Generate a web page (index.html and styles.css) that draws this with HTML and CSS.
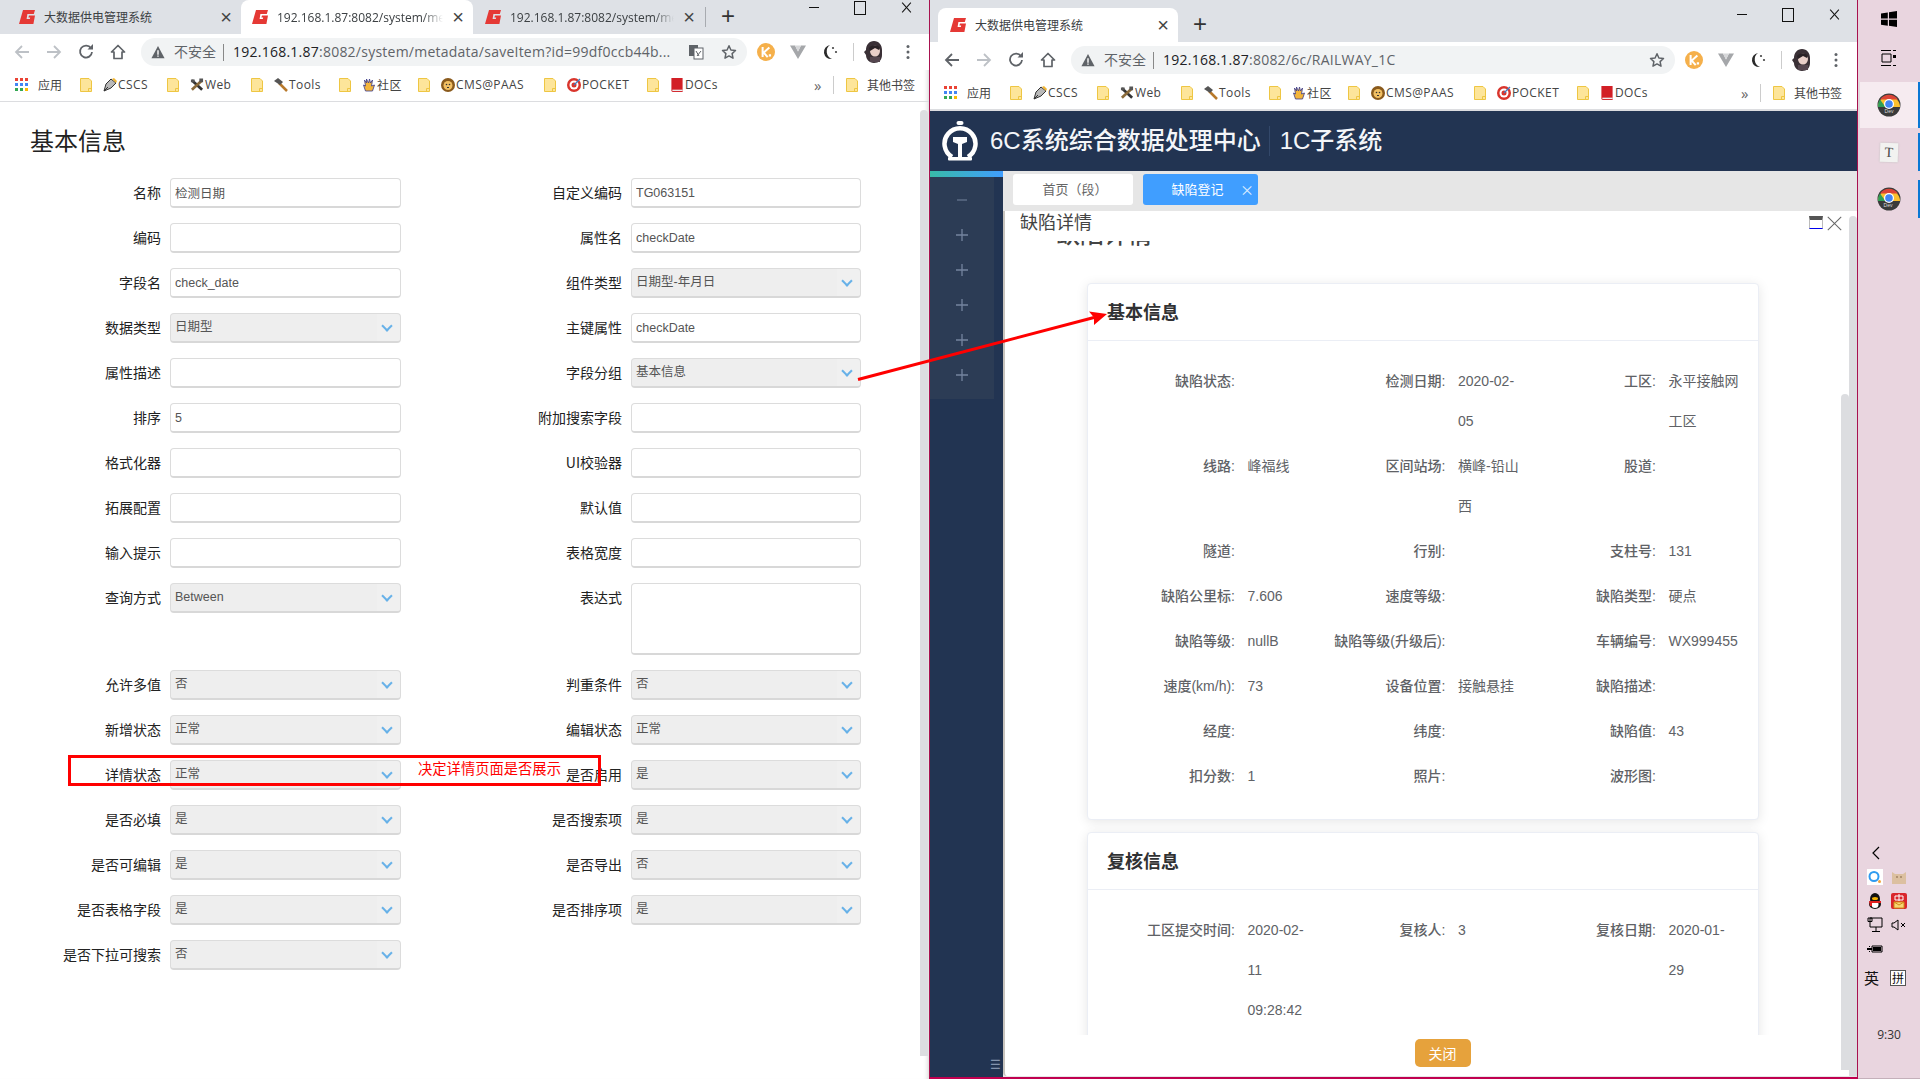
FILE: index.html
```html
<!DOCTYPE html>
<html lang="zh-CN">
<head>
<meta charset="utf-8">
<title>大数据供电管理系统</title>
<link rel="stylesheet" href="styles.css">
</head>
<body>
<svg class="defs" width="0" height="0" aria-hidden="true">
  <symbol id="fav" viewBox="0 0 16 14">
    <path d="M4 0h12l-1.200 4H8.400L7.600 9h3.200l.4-1.600H9.400l.6-2h6L14.400 14H0z" fill="#e53935"/>
  </symbol>
  <symbol id="back" viewBox="0 0 16 16"><path d="M15 8H2M8 2 2 8l6 6" fill="none" stroke="currentColor" stroke-width="1.800"/></symbol>
  <symbol id="fwd" viewBox="0 0 16 16"><path d="M1 8h13M8 2l6 6-6 6" fill="none" stroke="currentColor" stroke-width="1.800"/></symbol>
  <symbol id="reload" viewBox="0 0 16 16"><path d="M13 4.200A6 6 0 1 0 14 8" fill="none" stroke="currentColor" stroke-width="1.800"/><path d="M9.500 5.500H15V0z" fill="currentColor"/></symbol>
  <symbol id="home" viewBox="0 0 16 16"><path d="M8 1.500 1.500 8H4v6.500h8V8h2.500z" fill="none" stroke="currentColor" stroke-width="1.700" stroke-linejoin="round"/></symbol>
  <symbol id="warn" viewBox="0 0 16 16"><path d="M8 1 15.500 15H.5z" fill="#5f6368"/><path d="M7.200 6h1.600v5H7.200zM7.200 12h1.600v1.500H7.200z" fill="#fff"/></symbol>
  <symbol id="star" viewBox="0 0 16 16"><path d="m8 1.800 1.900 4.200 4.600.5-3.400 3.100.9 4.600L8 11.900l-4 2.300.9-4.600L1.500 6.500l4.600-.5z" fill="none" stroke="#5f6368" stroke-width="1.500" stroke-linejoin="round"/></symbol>
  <symbol id="trans" viewBox="0 0 16 16"><rect x="1" y="1" width="9" height="11" fill="#5f6368"/><rect x="6" y="4" width="9" height="11" fill="#fff" stroke="#5f6368"/><path d="m8 7 3 5m2-5-4 5" stroke="#5f6368" fill="none"/></symbol>
  <symbol id="ext-k" viewBox="0 0 16 16"><circle cx="8" cy="8" r="8" fill="#f5b04b"/><path d="M5 3.500v9M11 4 6 8.500l3.500 4M10.500 11h2" stroke="#fff" stroke-width="1.800" fill="none"/></symbol>
  <symbol id="ext-v" viewBox="0 0 16 16"><path d="M0 1.500h5l3 6 3-6h5L8 15z" fill="#a5a7aa"/><path d="M5 1.500h6L8 7.500z" fill="#d6d7d9"/></symbol>
  <symbol id="ext-m" viewBox="0 0 16 16"><path d="M8 1A7 7 0 1 0 10 15 A8 8 0 0 1 8 1z" fill="#2b2b2b"/><circle cx="11" cy="4" r="1.100" fill="#444"/><circle cx="14" cy="8" r="1.100" fill="#444"/></symbol>
  <symbol id="avatar" viewBox="0 0 20 22"><path d="M10 0C5 0 2 4 2 9L0 11l2 3c0 4 3 8 8 8s8-3 8-8V9c0-5-3-9-8-9z" fill="#3a3036"/><ellipse cx="11" cy="10" rx="5" ry="5.500" fill="#e9cfc9"/><path d="M5 7c2-3 9-4 11 0l-1 2-4-2-5 3z" fill="#2a2226"/><path d="M6 16h10v5H6z" fill="#55464f"/></symbol>
  <symbol id="dots" viewBox="0 0 4 16"><circle cx="2" cy="2.500" r="1.500" fill="#5f6368"/><circle cx="2" cy="8" r="1.500" fill="#5f6368"/><circle cx="2" cy="13.500" r="1.500" fill="#5f6368"/></symbol>
  <symbol id="apps" viewBox="0 0 13 13">
    <path fill="#ea4335" d="M0 0h3v3H0zM5 0h3v3H5z"/><path fill="#ea4335" d="M10 0h3v3h-3z"/>
    <path fill="#4285f4" d="M0 5h3v3H0zM5 5h3v3H5zM10 5h3v3h-3z"/>
    <path fill="#34a853" d="M0 10h3v3H0zM5 10h3v3H5z"/><path fill="#fbbc04" d="M10 10h3v3h-3z"/>
  </symbol>
  <symbol id="folder" viewBox="0 0 12 14"><path d="M.5.5h8.500l2.500 2.500v10.500H.5z" fill="#fde59a" stroke="#eec643"/><path d="M8.500 13.500v-3h3" fill="none" stroke="#eec643"/></symbol>
  <symbol id="b-pen" viewBox="0 0 14 14"><path d="M1 13 3 6l5-5 5 4-5 5z" fill="#b9b9b9" stroke="#333"/><path d="M9 1l4 4 1-2-3-3z" fill="#f2b632"/><path d="m1 13 4-4" stroke="#333"/></symbol>
  <symbol id="b-tool" viewBox="0 0 15 14"><path d="m2 2 11 10" stroke="#333" stroke-width="3"/><path d="m13 2-11 10" stroke="#8a6a3a" stroke-width="3"/><path d="M1 1h4v3H1zM10 0h4v4h-4z" fill="#555"/></symbol>
  <symbol id="b-ham" viewBox="0 0 14 14"><path d="m5 5 8 8" stroke="#b8792b" stroke-width="2.500"/><path d="M0 3 4 0l5 4-3 3z" fill="#555"/></symbol>
  <symbol id="b-hand" viewBox="0 0 13 14"><path d="M3 13 1 7l2 1-1-6 2 3V1l2 4 1-4 1 4 2-3-1 6 3-1-2 6z" fill="#f3b53a" stroke="#3a3a8a" stroke-width=".8"/></symbol>
  <symbol id="b-lion" viewBox="0 0 14 14"><circle cx="7" cy="7" r="7" fill="#8a5a1c"/><circle cx="7" cy="7.500" r="4.500" fill="#f2c063"/><circle cx="5.500" cy="6.500" r=".8" fill="#333"/><circle cx="8.500" cy="6.500" r=".8" fill="#333"/><path d="M6 9.500h2" stroke="#333"/></symbol>
  <symbol id="b-target" viewBox="0 0 14 14"><circle cx="7" cy="7" r="7" fill="#d9352c"/><circle cx="7" cy="7" r="4.500" fill="#fff"/><circle cx="7" cy="7" r="2.500" fill="#d9352c"/><path d="m7 7 6-6" stroke="#3f7fc4" stroke-width="1.200"/></symbol>
  <symbol id="b-book" viewBox="0 0 12 15"><path d="M0 0h12v15H1.500A1.500 1.500 0 0 1 0 13.500z" fill="#d21f26"/><path d="M1 12.500h11V14H1z" fill="#eee"/></symbol>
  <symbol id="mini" viewBox="0 0 12 12"><path d="M1 6h10" stroke="currentColor" stroke-width="1"/></symbol>
  <symbol id="plus" viewBox="0 0 12 12"><path d="M0 6h12M6 0v12" stroke="currentColor" stroke-width="1.300"/></symbol>
  <symbol id="chrome" viewBox="0 0 24 24">
    <circle cx="12" cy="12" r="11.500" fill="#3a3a3a"/>
    <path d="M1 14a11 11 0 0 1 22 0z" fill="#fbc02d"/>
    <path d="M3 6.500a11 11 0 0 1 18 0h-9z" fill="#db4437"/>
    <path d="M1 14a11 11 0 0 1 2-7.500l5.500 7.500z" fill="#2f9e57"/>
    <circle cx="12" cy="11" r="5" fill="#fff"/><circle cx="12" cy="11" r="3.800" fill="#4285f4"/>
  </symbol>
</svg>

<div class="desktop">
  <!-- left browser -->
  <section class="win win-left">
    <div class="tabstrip strip-left">
      <div class="tab tab-first"><svg class="fav"><use href="#fav"/></svg><span class="tab-title">大数据供电管理系统</span><span class="tab-x">×</span></div>
      <div class="tab tab-on"><svg class="fav"><use href="#fav"/></svg><span class="tab-title fade">192.168.1.87:8082/system/metadata/saveItem</span><span class="tab-x">×</span></div>
      <div class="tab tab-third"><svg class="fav"><use href="#fav"/></svg><span class="tab-title fade">192.168.1.87:8082/system/metadata/saveItem</span><span class="tab-x">×</span></div>
      <span class="tab-sep"></span>
      <span class="newtab">+</span>
      <div class="winctl"><span class="ctl-min"></span><span class="ctl-max"></span><span class="ctl-close"></span></div>
    </div>
    <div class="toolbar">
      <svg class="nav off"><use href="#back"/></svg><svg class="nav off"><use href="#fwd"/></svg><svg class="nav"><use href="#reload"/></svg><svg class="nav"><use href="#home"/></svg>
      <div class="pill">
        <svg class="warn"><use href="#warn"/></svg><span class="insecure">不安全</span><span class="pill-sep"></span>
        <span class="url"><b>192.168.1.87</b>:8082/system/metadata/saveItem?id=99df0ccb44b...</span>
        <svg class="trans"><use href="#trans"/></svg><svg class="star"><use href="#star"/></svg>
      </div>
      <svg class="ext first"><use href="#ext-k"/></svg><svg class="ext"><use href="#ext-v"/></svg><svg class="ext"><use href="#ext-m"/></svg><span class="ext-sep"></span><svg class="avatar"><use href="#avatar"/></svg><svg class="dots"><use href="#dots"/></svg>
    </div>
    <div class="bookmarks">
      <span class="bm bm-apps"><svg class="i-apps"><use href="#apps"/></svg>应用</span>
      <span class="bm bm1"><svg class="folder"><use href="#folder"/></svg><svg class="bi"><use href="#b-pen"/></svg>CSCS</span>
      <span class="bm bm2"><svg class="folder"><use href="#folder"/></svg><svg class="bi"><use href="#b-tool"/></svg>Web</span>
      <span class="bm bm3"><svg class="folder"><use href="#folder"/></svg><svg class="bi"><use href="#b-ham"/></svg>Tools</span>
      <span class="bm bm4"><svg class="folder"><use href="#folder"/></svg><svg class="bi"><use href="#b-hand"/></svg>社区</span>
      <span class="bm bm5"><svg class="folder"><use href="#folder"/></svg><svg class="bi"><use href="#b-lion"/></svg>CMS@PAAS</span>
      <span class="bm bm6"><svg class="folder"><use href="#folder"/></svg><svg class="bi"><use href="#b-target"/></svg>POCKET</span>
      <span class="bm bm7"><svg class="folder"><use href="#folder"/></svg><svg class="bi"><use href="#b-book"/></svg>DOCs</span>
      <span class="more">»</span><span class="bm-sep"></span>
      <span class="bm bm-other"><svg class="folder"><use href="#folder"/></svg>其他书签</span>
    </div>
    <main class="form-page">
      <h2 class="form-title">基本信息</h2>
      <div class="form-grid">
        <label class="lb">名称</label><input class="field ph" value="检测日期">
        <label class="lb">自定义编码</label><input class="field" value="TG063151">
        <label class="lb">编码</label><input class="field" value="">
        <label class="lb">属性名</label><input class="field" value="checkDate">
        <label class="lb">字段名</label><input class="field" value="check_date">
        <label class="lb">组件类型</label><div class="field sel">日期型-年月日</div>
        <label class="lb">数据类型</label><div class="field sel">日期型</div>
        <label class="lb">主键属性</label><input class="field" value="checkDate">
        <label class="lb">属性描述</label><input class="field" value="">
        <label class="lb">字段分组</label><div class="field sel">基本信息</div>
        <label class="lb">排序</label><input class="field" value="5">
        <label class="lb">附加搜索字段</label><input class="field" value="">
        <label class="lb">格式化器</label><input class="field" value="">
        <label class="lb">UI校验器</label><input class="field" value="">
        <label class="lb">拓展配置</label><input class="field" value="">
        <label class="lb">默认值</label><input class="field" value="">
        <label class="lb">输入提示</label><input class="field" value="">
        <label class="lb">表格宽度</label><input class="field" value="">
        <label class="lb">查询方式</label><div class="field sel">Between</div>
        <label class="lb">表达式</label><textarea class="field area"></textarea>
        <label class="lb">允许多值</label><div class="field sel">否</div>
        <label class="lb">判重条件</label><div class="field sel">否</div>
        <label class="lb">新增状态</label><div class="field sel">正常</div>
        <label class="lb">编辑状态</label><div class="field sel">正常</div>
        <label class="lb">详情状态</label><div class="field sel">正常</div>
        <label class="lb">是否启用</label><div class="field sel">是</div>
        <label class="lb">是否必填</label><div class="field sel">是</div>
        <label class="lb">是否搜索项</label><div class="field sel">是</div>
        <label class="lb">是否可编辑</label><div class="field sel">是</div>
        <label class="lb">是否导出</label><div class="field sel">否</div>
        <label class="lb">是否表格字段</label><div class="field sel">是</div>
        <label class="lb">是否排序项</label><div class="field sel">是</div>
        <label class="lb">是否下拉可搜索</label><div class="field sel">否</div>
      </div>
      <div class="page-scroll"></div>
    </main>
  </section>

  <!-- right browser -->
  <section class="win win-right">
    <div class="tabstrip strip-right">
      <div class="tab tab-on tab-single"><svg class="fav"><use href="#fav"/></svg><span class="tab-title">大数据供电管理系统</span><span class="tab-x">×</span></div>
      <span class="newtab newtab-r">+</span>
      <div class="winctl"><span class="ctl-min"></span><span class="ctl-max"></span><span class="ctl-close"></span></div>
    </div>
    <div class="toolbar">
      <svg class="nav dark"><use href="#back"/></svg><svg class="nav off"><use href="#fwd"/></svg><svg class="nav"><use href="#reload"/></svg><svg class="nav"><use href="#home"/></svg>
      <div class="pill">
        <svg class="warn"><use href="#warn"/></svg><span class="insecure">不安全</span><span class="pill-sep"></span>
        <span class="url"><b>192.168.1.87</b>:8082/6c/RAILWAY_1C</span>
        <svg class="star"><use href="#star"/></svg>
      </div>
      <svg class="ext first"><use href="#ext-k"/></svg><svg class="ext"><use href="#ext-v"/></svg><svg class="ext"><use href="#ext-m"/></svg><span class="ext-sep"></span><svg class="avatar"><use href="#avatar"/></svg><svg class="dots"><use href="#dots"/></svg>
    </div>
    <div class="bookmarks bookmarks-r">
      <span class="bm bm-apps"><svg class="i-apps"><use href="#apps"/></svg>应用</span>
      <span class="bm bm1"><svg class="folder"><use href="#folder"/></svg><svg class="bi"><use href="#b-pen"/></svg>CSCS</span>
      <span class="bm bm2"><svg class="folder"><use href="#folder"/></svg><svg class="bi"><use href="#b-tool"/></svg>Web</span>
      <span class="bm bm3"><svg class="folder"><use href="#folder"/></svg><svg class="bi"><use href="#b-ham"/></svg>Tools</span>
      <span class="bm bm4"><svg class="folder"><use href="#folder"/></svg><svg class="bi"><use href="#b-hand"/></svg>社区</span>
      <span class="bm bm5"><svg class="folder"><use href="#folder"/></svg><svg class="bi"><use href="#b-lion"/></svg>CMS@PAAS</span>
      <span class="bm bm6"><svg class="folder"><use href="#folder"/></svg><svg class="bi"><use href="#b-target"/></svg>POCKET</span>
      <span class="bm bm7"><svg class="folder"><use href="#folder"/></svg><svg class="bi"><use href="#b-book"/></svg>DOCs</span>
      <span class="more">»</span><span class="bm-sep"></span>
      <span class="bm bm-other"><svg class="folder"><use href="#folder"/></svg>其他书签</span>
    </div>
    <header class="app-head">
      <svg class="logo" viewBox="0 0 36 40">
        <path d="M10 36A15.500 15.500 0 1 1 26 36" fill="none" stroke="#fff" stroke-width="4.500"/>
        <rect x="14.500" y="0" width="7" height="4" rx="2" fill="#fff"/>
        <path d="M11 16h14v5l-5 2v13h-4V23l-5-2z" fill="#fff"/>
        <rect x="6" y="36" width="24" height="3.500" rx="1" fill="#fff"/>
      </svg>
      <span class="app-name">6C系统综合数据处理中心</span>
      <span class="app-sep"></span>
      <span class="app-name">1C子系统</span>
    </header>
    <div class="app-body">
      <aside class="side">
        <div class="side-strip"></div>
        <nav class="side-menu">
          <svg class="mi"><use href="#mini"/></svg>
          <svg class="mi"><use href="#plus"/></svg>
          <svg class="mi"><use href="#plus"/></svg>
          <svg class="mi"><use href="#plus"/></svg>
          <svg class="mi"><use href="#plus"/></svg>
          <svg class="mi"><use href="#plus"/></svg>
        </nav>
        <div class="side-foot">☰</div>
      </aside>
      <div class="work">
        <div class="work-tabs">
          <span class="wtab">首页（段）</span>
          <span class="wtab wtab-on">缺陷登记<i class="wtab-x">×</i></span>
        </div>
        <div class="modal">
          <div class="modal-head">
            <span class="modal-title">缺陷详情</span>
            <span class="modal-ctl"><span class="m-max"></span><span class="m-close"></span></span>
          </div>
          <div class="modal-scroll">
            <div class="clip-head"><span class="clip-text">缺陷详情</span></div>
            <article class="card">
              <h3 class="card-head">基本信息</h3>
              <div class="detail">
                <span class="k">缺陷状态:</span><span class="v"></span>
                <span class="k">检测日期:</span><span class="v">2020-02-05</span>
                <span class="k">工区:</span><span class="v">永平接触网工区</span>
                <span class="k">线路:</span><span class="v">峰福线</span>
                <span class="k">区间站场:</span><span class="v">横峰-铅山西</span>
                <span class="k">股道:</span><span class="v"></span>
                <span class="k">隧道:</span><span class="v"></span>
                <span class="k">行别:</span><span class="v"></span>
                <span class="k">支柱号:</span><span class="v">131</span>
                <span class="k">缺陷公里标:</span><span class="v">7.606</span>
                <span class="k">速度等级:</span><span class="v"></span>
                <span class="k">缺陷类型:</span><span class="v">硬点</span>
                <span class="k">缺陷等级:</span><span class="v">nullB</span>
                <span class="k">缺陷等级(升级后):</span><span class="v"></span>
                <span class="k">车辆编号:</span><span class="v">WX999455</span>
                <span class="k">速度(km/h):</span><span class="v">73</span>
                <span class="k">设备位置:</span><span class="v">接触悬挂</span>
                <span class="k">缺陷描述:</span><span class="v"></span>
                <span class="k">经度:</span><span class="v"></span>
                <span class="k">纬度:</span><span class="v"></span>
                <span class="k">缺陷值:</span><span class="v">43</span>
                <span class="k">扣分数:</span><span class="v">1</span>
                <span class="k">照片:</span><span class="v"></span>
                <span class="k">波形图:</span><span class="v"></span>
              </div>
            </article>
            <article class="card">
              <h3 class="card-head">复核信息</h3>
              <div class="detail">
                <span class="k">工区提交时间:</span><span class="v">2020-02-11 09:28:42</span>
                <span class="k">复核人:</span><span class="v">3</span>
                <span class="k">复核日期:</span><span class="v">2020-01-29</span>
              </div>
            </article>
          </div>
          <div class="modal-foot"><button class="btn-close">关闭</button></div>
          <div class="sb-thin"></div>
          <div class="sb-wide"></div>
        </div>
      </div>
    </div>
  </section>

  <!-- taskbar -->
  <aside class="taskbar">
    <svg class="tb-win" viewBox="0 0 16 16"><path d="M0 2.500 6.800 1.500v6H0zM8 1.300 16 0v7.500H8zM0 8.700h6.800v6L0 13.700zM8 8.700h8V16l-8-1.200z" fill="#000"/></svg>
    <svg class="tb-view" viewBox="0 0 16 16"><path d="M0 .5h10M0 15.500h10M1 4h9v8H1zM12 .5h3M12 15.500h3" fill="none" stroke="#000"/><path d="M12 5h3v3h-3z" fill="#000"/></svg>
    <div class="tb-app tb-active"><svg class="tb-chrome"><use href="#chrome"/></svg><span class="dev">Dev</span></div>
    <div class="tb-app tb-note"><span class="note-t">T</span></div>
    <div class="tb-app tb-last"><svg class="tb-chrome"><use href="#chrome"/></svg><span class="dev">Dev</span></div>
    <div class="tray">
      <svg class="tray-arrow" viewBox="0 0 10 14"><path d="M8 1 2 7l6 6" fill="none" stroke="#000" stroke-width="1.200"/></svg>
      <div class="tray-grid">
        <svg viewBox="0 0 16 16"><rect width="16" height="16" fill="#fff"/><circle cx="7" cy="7.500" r="4.500" fill="none" stroke="#2f9bf0" stroke-width="2"/><circle cx="12.500" cy="12.500" r="1.500" fill="#f2a33a"/></svg>
        <svg viewBox="0 0 16 16"><path d="M1 15V3l3 2h8l3-2v12z" fill="#dcc0a0"/><circle cx="6" cy="8" r=".8" fill="#7a5a3a"/><circle cx="10" cy="8" r=".8" fill="#7a5a3a"/></svg>
        <svg viewBox="0 0 16 16"><ellipse cx="8" cy="6" rx="5" ry="6" fill="#111"/><ellipse cx="8" cy="11" rx="6" ry="5" fill="#111"/><ellipse cx="8" cy="11.500" rx="3.500" ry="3.500" fill="#fff"/><path d="M2 8h12v2H5v3H3z" fill="#e02020"/><ellipse cx="8" cy="5.500" rx="3" ry="1.500" fill="#f4b400"/></svg>
        <svg viewBox="0 0 16 16"><rect width="16" height="16" rx="2" fill="#d9262c"/><path d="M3 9h10v6H3z" fill="#f7d774" stroke="#d18b16"/><path d="m3 9 5 3 5-3" fill="none" stroke="#d18b16"/><path d="M4 3h8v4H4zM8 1v7" fill="none" stroke="#fff"/></svg>
        <svg viewBox="0 0 16 16"><path d="M3 1h12v9H3zM1 1h4v3.500H1zM9 10v4M5 14.500h8" fill="none" stroke="#000"/></svg>
        <svg viewBox="0 0 16 16"><path d="M1 6h2l4-3v10l-4-3H1z" fill="none" stroke="#000"/><path d="m10 6 4 4m0-4-4 4" stroke="#000"/></svg>
        <svg viewBox="0 0 16 16"><path d="M5 5h10v6H5z" fill="none" stroke="#000"/><path d="M6 6h8v4H6zM0 7h5v2H0zM2 5h1v1H2zM2 10h1v1H2z" fill="#000"/></svg>
        <span></span>
      </div>
      <div class="ime"><span class="ime-en">英</span><span class="ime-py">拼</span></div>
      <div class="clock">9:30</div>
    </div>
  </aside>

  <!-- annotations drawn over both windows -->
  <div class="note-box"><span class="note-text">决定详情页面是否展示</span></div>
  <svg class="arrow" viewBox="0 0 1920 1079">
    <path d="M858 379.500 1094 317.500" stroke="#f00" stroke-width="3" fill="none"/>
    <path d="M1107 314 1089 311.500 1094 317.500 1094 325z" fill="#f00"/>
  </svg>
</div>
</body>
</html>
```

FILE: styles.css
```css
* { box-sizing: border-box; }
html, body { margin: 0; height: 100%; }
body {
  font-family: "Liberation Sans", "Noto Sans CJK SC", sans-serif;
  font-size: 14px;
  color: #333;
  overflow: hidden;
}
.defs { position: absolute; }

.desktop { position: relative; display: flex; width: 1920px; height: 1079px; background: #e9d5df; overflow: hidden; }

/* browser windows */
.win { display: flex; flex-direction: column; background: #fff; height: 1079px; flex: none; }
.win-left { width: 929px; box-shadow: inset -5px 0 5px -4px rgba(0,0,0,.18); }
.win-right { width: 929px; border-left: 1px solid #a8124f; border-right: 1px solid #a8124f; border-bottom: 2px solid #c0004f; }

.tabstrip { display: flex; align-items: flex-end; background: #dee1e6; flex: none; position: relative; }
.strip-left { height: 34px; }
.strip-right { height: 42px; padding-left: 8px; }
.tab { display: flex; align-items: center; height: 34px; font: 12px "Noto Sans CJK SC", sans-serif; color: #3c4043; flex: none; }
.tab-first { width: 241px; padding-left: 19px; }
.tab-on { width: 232px; padding-left: 11px; background: #fff; border-radius: 8px 8px 0 0; }
.tab-third { width: 231px; padding-left: 12px; }
.tab-single { width: 240px; padding-left: 12px; }
.fav { width: 16px; height: 14px; flex: none; }
.tab-title { margin-left: 9px; flex: 1; white-space: nowrap; overflow: hidden; font-family: "Open Sans", "Noto Sans CJK SC", sans-serif; }
.fade { -webkit-mask-image: linear-gradient(90deg, #000 88%, transparent); mask-image: linear-gradient(90deg, #000 88%, transparent); }
.tab-x { width: 30px; flex: none; text-align: center; font: 20px/1 "Liberation Sans", sans-serif; color: #444; }
.tab-sep { width: 1px; height: 20px; background: #a8abb0; margin: 0 0 7px 1px; }
.newtab { width: 44px; height: 34px; text-align: center; font: 300 24px/32px "Liberation Sans", sans-serif; color: #333; flex: none; }
.newtab-r { width: 44px; }
.winctl { position: absolute; top: 0; right: 0; display: flex; }
.strip-left .winctl span { height: 14px; }
.winctl span { display: block; width: 46px; height: 28px; position: relative; }
.ctl-min::before { content: ""; position: absolute; left: 18px; top: 50%; width: 10px; height: 1px; background: #111; }
.ctl-max::before { content: ""; position: absolute; left: 17px; top: 50%; width: 10px; height: 12px; margin-top: -6px; border: 1px solid #111; }
.ctl-close::before, .ctl-close::after { content: ""; position: absolute; left: 17px; top: 50%; width: 13px; height: 1px; background: #111; }
.ctl-close::before { transform: rotate(48deg); }
.ctl-close::after { transform: rotate(-48deg); }

.toolbar { display: flex; align-items: center; height: 36px; flex: none; padding: 0 5px 0 6px; background: #fff; }
.nav { width: 16px; height: 16px; margin: 0 8px; color: #5f6368; flex: none; }
.nav.off { color: #bdc1c6; }
.nav.dark { color: #5f6368; }
.pill { flex: 1; min-width: 0; height: 28px; margin-left: 7px; border-radius: 14px; background: #f1f3f4; display: flex; align-items: center; padding: 0 8px 0 10px; }
.warn { width: 14px; height: 14px; flex: none; }
.insecure { font: 14px "Noto Sans CJK SC", sans-serif; margin-left: 9px; padding-bottom: 2px; color: #5f6368; white-space: nowrap; }
.pill-sep { width: 1px; height: 17px; background: #888; margin: 0 9px 0 7px; flex: none; }
.url { flex: 1; padding-bottom: 2px; font: 14px "Open Sans", sans-serif; color: #5f6368; white-space: nowrap; overflow: hidden; letter-spacing: .24px; }
.url b { font-weight: 400; color: #202124; }
.trans { width: 16px; height: 16px; margin-right: 17px; flex: none; }
.star { width: 16px; height: 16px; flex: none; margin-right: 2px; }
.ext { width: 16px; height: 16px; margin: 0 8px; flex: none; }
.ext.first { width: 18px; height: 18px; margin: 0 7px 0 10px; }
.ext-sep { width: 1px; height: 18px; background: #ccc; margin: 0 4px 0 7px; flex: none; }
.avatar { width: 20px; height: 22px; margin: 0 6px; flex: none; }
.dots { width: 4px; height: 16px; margin: 0 14px 0 16px; flex: none; }

.bookmarks { display: flex; align-items: center; height: 32px; flex: none; padding: 0 0 2px 15px; border-bottom: 1px solid #dcdde0; font: 12px "Open Sans", "Noto Sans CJK SC", sans-serif; color: #444; }
.bookmarks-r { height: 33px; padding-left: 14px; border-bottom-width: 2px; }
.bm { display: flex; align-items: center; white-space: nowrap; flex: none; letter-spacing: .4px; }
.bm-apps, .bm-other { letter-spacing: 0; }
.bm-apps { width: 65px; }
.bookmarks-r .bm-apps { width: 66px; }
.i-apps { width: 13px; height: 13px; margin-right: 10px; flex: none; }
.folder { width: 12px; height: 14px; margin-right: 11px; flex: none; }
.bi { width: 14px; height: 14px; margin-right: 1px; flex: none; }
.bm1 { width: 87px; } .bm2 { width: 84px; } .bm3 { width: 88px; } .bm4 { width: 79px; } .bm5 { width: 126px; } .bm6 { width: 103px; } .bm7 { width: 167px; }
.bookmarks-r .bm7 { width: 164px; }
.more { width: 19px; font-size: 15px; color: #666; flex: none; }
.bm-sep { width: 1px; height: 18px; background: #ccc; margin-right: 12px; flex: none; }
.bm-other .folder { margin-right: 9px; }

/* left form page */
.form-page { flex: 1; position: relative; }
.form-title { margin: 0; padding: 24px 0 24px 30px; font: 400 24px/28px "Noto Sans CJK SC", sans-serif; color: #222; }
.form-grid { display: grid; grid-template-columns: 161px 231px 212px 230px; column-gap: 9px; row-gap: 15px; align-items: start; }
.lb { text-align: right; line-height: 28px; font-family: "Noto Sans CJK SC", "Liberation Sans", sans-serif; font-size: 14px; color: #222; white-space: nowrap; }
.field { display: block; width: 100%; height: 30px; margin: 0; padding: 0 4px; border: 1px solid #dcdcdc; border-bottom: 2px solid #d8d8d8; border-radius: 4px; background: #fff; font: 12.500px/27px "Liberation Sans", "Noto Sans CJK SC", sans-serif; color: #555; outline: 0; }
.area { height: 72px; resize: none; }
.sel { position: relative; background: linear-gradient(90deg, #eeeeee 90%, #f0f0f0 90%); }
.sel::after { content: ""; position: absolute; right: 9px; top: 8px; width: 6px; height: 6px; border: solid #67b1e8; border-width: 0 2px 2px 0; transform: rotate(45deg); }
.page-scroll { position: absolute; top: 8px; right: 1px; bottom: 23px; width: 8px; background: #dcdde0; border-radius: 4px 4px 0 0; }

/* right app */
.app-head { height: 60px; flex: none; display: flex; align-items: center; background: #223452; padding-left: 12px; color: #fff; }
.logo { width: 36px; height: 40px; flex: none; margin-right: 12px; }
.app-name { font: 500 24px/1 "Liberation Sans", "Noto Sans CJK SC", sans-serif; white-space: nowrap; color: #f4f6f9; }
.app-sep { width: 1px; height: 30px; background: #33486a; margin: 0 10px 0 8px; }
.app-body { flex: 1; display: flex; min-height: 0; }
.side { width: 73px; flex: none; background: #223452; display: flex; flex-direction: column; }
.side-strip { height: 6px; flex: none; background: linear-gradient(90deg, #38bba8, #409eff); }
.side-menu { width: 64px; height: 222px; padding-top: 5px; flex: none; background: #2c3c55; display: flex; flex-direction: column; align-items: center; color: #74849f; }
.mi { width: 12px; height: 12px; margin: 12px 0 11px; flex: none; color: #74849f; }
.side-foot { margin-top: auto; margin-bottom: 1px; text-align: right; padding-right: 2px; font-size: 12px; line-height: 22px; color: #8393ad; }
.work { flex: 1; min-width: 0; display: flex; flex-direction: column; background: #e6e6e6; }
.work-tabs { height: 40px; flex: none; display: flex; align-items: flex-start; padding: 3px 0 0 10px; column-gap: 10px; }
.wtab { display: block; width: 120px; height: 31px; padding-left: 4px; background: #fff; border-radius: 3px; text-align: center; font: 13px/30px "Noto Sans CJK SC", sans-serif; color: #666; position: relative; }
.wtab-on { width: 115px; background: #409eff; color: #fff; padding: 0 6px 0 0; }
.wtab-x { position: absolute; right: 4px; top: 0; font-style: normal; color: #dcecff; font-size: 14px; }
.modal { flex: 1; min-height: 0; position: relative; display: flex; flex-direction: column; background: #fff; border-left: 2px solid #c8c4be; margin-bottom: 1px; border-radius: 0 0 4px 4px; }
.modal-head { height: 25px; flex: none; display: flex; justify-content: space-between; padding-left: 15px; }
.modal-title { font: 18px/20px "Noto Sans CJK SC", sans-serif; color: #444; }
.modal-ctl { display: flex; padding: 5px 15px 0 0; }
.m-max { width: 14px; height: 13px; border: 1px solid #bbb; border-top: 4px solid #555; border-bottom: 1px solid #00e; }
.m-close { width: 16px; height: 14px; margin-left: 3px; position: relative; }
.m-close::before, .m-close::after { content: ""; position: absolute; left: -1px; top: 7px; width: 19px; height: 1px; background: #666; }
.m-close::before { transform: rotate(45deg); }
.m-close::after { transform: rotate(-45deg); }
.modal-scroll { flex: 1; min-height: 0; overflow: hidden; padding: 0 0 0 82px; }
.clip-head { height: 42px; margin: 5px 0 0 -31px; overflow: hidden; }
.clip-text { display: block; margin-top: -26px; font: 500 24px/36px "Noto Sans CJK SC", sans-serif; color: #444; }
.card { width: 672px; margin-bottom: 12px; background: #fff; border: 1px solid #ebeef5; border-radius: 4px; box-shadow: 0 2px 12px rgba(0,0,0,.1); }
.card-head { margin: 0; height: 57px; padding-left: 19px; border-bottom: 1px solid #ebeef5; font: 700 18px/54px "Noto Sans CJK SC", sans-serif; color: #303133; }
.detail { display: grid; grid-template-columns: repeat(3, 120px 90.500px); row-gap: 5px; padding: 20px 0 23px 27px; line-height: 40px; font-size: 14px; color: #606266; font-family: "Liberation Sans", "Noto Sans CJK SC", sans-serif; }
.k { text-align: right; font-weight: 500; white-space: nowrap; }
.v { padding: 0 7.800px 0 12.500px; overflow-wrap: anywhere; }
.modal-foot { height: 41px; flex: none; display: flex; justify-content: center; padding: 4px 0 0 23px; }
.btn-close { width: 56px; height: 28px; padding: 0; border: 0; border-radius: 5px; background: #e6a23c; color: #fff; font: 14px "Noto Sans CJK SC", sans-serif; }
.sb-thin { position: absolute; right: 0; top: 5px; bottom: 0; width: 8px; background: #dcdde0; border-radius: 4px 4px 0 0; }
.sb-wide { position: absolute; right: 8px; top: 183px; bottom: 6px; width: 8px; background: #dcdde0; border-radius: 4px 4px 0 0; }

/* taskbar */
.taskbar { flex: 1; position: relative; display: flex; flex-direction: column; align-items: center; border-bottom: 1px solid #c4b0ba; padding-top: 11px; }
.tb-win { width: 16px; height: 16px; flex: none; }
.tb-view { width: 16px; height: 16px; margin: 23px 0 16px; flex: none; }
.tb-app { position: relative; width: 100%; height: 46px; flex: none; display: flex; align-items: center; justify-content: center; padding-left: 2px; border-right: 2px solid #0a78d4; }
.tb-active { background: #f6ebf0; border-left: 2px solid #e2d8dd; padding-left: 0; height: 46px; }
.tb-note { margin-top: 5px; height: 38px; }
.tb-last { margin-top: 9px; height: 38px; }
.tb-chrome { width: 24px; height: 24px; }
.dev { position: absolute; left: 50%; top: 50%; margin: 3px 0 0 -6px; width: 12px; text-align: center; font-size: 5px; color: #ddd; }
.note-t { display: block; width: 18px; height: 19px; background: #f2f2f0; box-shadow: 0 0 2px #bbb; text-align: center; font: 14px/19px "Liberation Serif", serif; color: #444; transform: rotate(2deg); }
.tray { margin-top: auto; width: 100%; display: flex; flex-direction: column; align-items: flex-start; padding: 0 0 36px 7px; }
.tray-arrow { width: 10px; height: 14px; margin: 0 0 9px 6px; }
.tray-grid { display: grid; grid-template-columns: 16px 16px; column-gap: 8px; row-gap: 8px; margin-left: 2px; }
.tray-grid svg { width: 16px; height: 16px; display: block; }
.ime { display: flex; align-items: center; margin: 12px 0 0 -1px; column-gap: 11px; }
.ime-en { font: 15px/18px "Noto Sans CJK SC", sans-serif; color: #111; }
.ime-py { width: 16px; height: 16px; border: 1px solid #555; background: #fff; text-align: center; font: 12px/14px "Noto Sans CJK SC", sans-serif; color: #111; }
.clock { width: 100%; margin-top: 41px; padding-right: 7px; text-align: center; font: 12px/14px "Open Sans", sans-serif; color: #333; }

/* annotations */
.note-box { position: absolute; left: 68px; top: 755px; width: 533px; height: 31px; border: 3px solid #f00; display: flex; align-items: center; padding: 0 0 5px 347px; }
.note-text { font: 14.300px/1 "Noto Sans CJK SC", sans-serif; color: #f00; white-space: nowrap; }
.arrow { position: absolute; left: 0; top: 0; width: 1920px; height: 1079px; pointer-events: none; }
```
